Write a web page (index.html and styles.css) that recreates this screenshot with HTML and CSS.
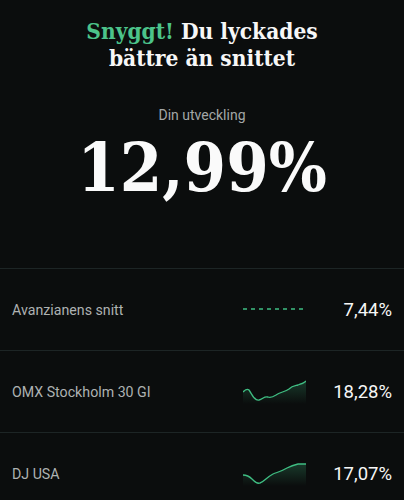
FILE: index.html
```html
<!DOCTYPE html>
<html lang="sv">
<head>
    <meta charset="UTF-8">
    <meta name="viewport" content="width=device-width, initial-scale=1.0">
    <title>Din utveckling</title>
    <link rel="stylesheet" href="styles.css">
</head>
<body>
    <div class="hero">
        <h1 class="title"><span class="accent">Snyggt!</span> Du lyckades<br>bättre än snittet</h1>
        <div class="caption">Din utveckling</div>
        <div class="big-value">12,99%</div>
    </div>

    <div class="list">
        <div class="row">
            <span class="label">Avanzianens snitt</span>
            <svg class="chart" viewBox="0 0 63 24">
                <line x1="0" y1="11" x2="63" y2="11" stroke="#3fbd82" stroke-width="1.3" stroke-dasharray="4 4"></line>
            </svg>
            <span class="value">7,44%</span>
        </div>
        <div class="row">
            <span class="label">OMX Stockholm 30 GI</span>
            <svg class="chart" viewBox="0 0 63 24">
                <defs>
                    <linearGradient id="fill1" x1="0" y1="0" x2="0" y2="1">
                        <stop offset="0" stop-color="#3fbd82" stop-opacity="0.25"></stop>
                        <stop offset="1" stop-color="#3fbd82" stop-opacity="0"></stop>
                    </linearGradient>
                </defs>
                <path d="M0 12 C2 10 4 8 6 10 C9 14 11 21 16 20 C20 19 21 16 25 17 C28 18 30 17 33 15 C37 12 42 12 46 9 C49 6 51 6 55 5 C58 4 61 3 63 1 L63 24 L0 24 Z" fill="url(#fill1)"></path>
                <path d="M0 12 C2 10 4 8 6 10 C9 14 11 21 16 20 C20 19 21 16 25 17 C28 18 30 17 33 15 C37 12 42 12 46 9 C49 6 51 6 55 5 C58 4 61 3 63 1" fill="none" stroke="#3fbd82" stroke-width="1.3"></path>
            </svg>
            <span class="value">18,28%</span>
        </div>
        <div class="row">
            <span class="label">DJ USA</span>
            <svg class="chart" viewBox="0 0 63 24">
                <defs>
                    <linearGradient id="fill2" x1="0" y1="0" x2="0" y2="1">
                        <stop offset="0" stop-color="#3fbd82" stop-opacity="0.25"></stop>
                        <stop offset="1" stop-color="#3fbd82" stop-opacity="0"></stop>
                    </linearGradient>
                </defs>
                <path d="M0 13 C3 13 6 14 9 17 C12 20 14 22 17 21 C21 20 24 15 30 12 C35 10 39 9 44 6 C48 4 51 3 55 2 C58 2 61 2 63 2 L63 24 L0 24 Z" fill="url(#fill2)"></path>
                <path d="M0 13 C3 13 6 14 9 17 C12 20 14 22 17 21 C21 20 24 15 30 12 C35 10 39 9 44 6 C48 4 51 3 55 2 C58 2 61 2 63 2" fill="none" stroke="#3fbd82" stroke-width="1.3"></path>
            </svg>
            <span class="value">17,07%</span>
        </div>
    </div>
</body>
</html>
```

FILE: styles.css
```css
body {
    margin: 0;
    background: #0b0d0d;
    font-family: Roboto, "Liberation Sans", sans-serif;
    color: #f5f5f5;
}

.hero {
    display: flex;
    flex-direction: column;
    align-items: center;
    padding-top: 18px;
    height: 252px;
    box-sizing: border-box;
}

.title {
    margin: 0;
    font-family: "DejaVu Serif Condensed", "DejaVu Serif", serif;
    font-weight: bold;
    font-size: 22.5px;
    line-height: 27px;
    text-align: center;
    color: #f7f7f7;
}

.accent {
    color: #4cc38a;
}

.caption {
    margin-top: 35px;
    font-size: 14px;
    color: #a3a7a7;
}

.big-value {
    margin-top: 0;
    font-family: "DejaVu Serif Condensed", "DejaVu Serif", serif;
    font-weight: bold;
    font-size: 68px;
    line-height: 88px;
    color: #fafafa;
}

.list {
    border-top: 1px solid #1d2525;
    margin-top: 16px;
}

.row {
    display: flex;
    align-items: center;
    height: 81px;
    padding: 0 12px 0 12px;
    border-bottom: 1px solid #1d2525;
}

.label {
    flex: 1;
    font-size: 14.2px;
    color: #aeb2b2;
}

.chart {
    width: 63px;
    height: 24px;
}

.value {
    width: 86px;
    text-align: right;
    font-size: 18.5px;
    font-weight: 400;
    color: #f7f7f7;
}
```
